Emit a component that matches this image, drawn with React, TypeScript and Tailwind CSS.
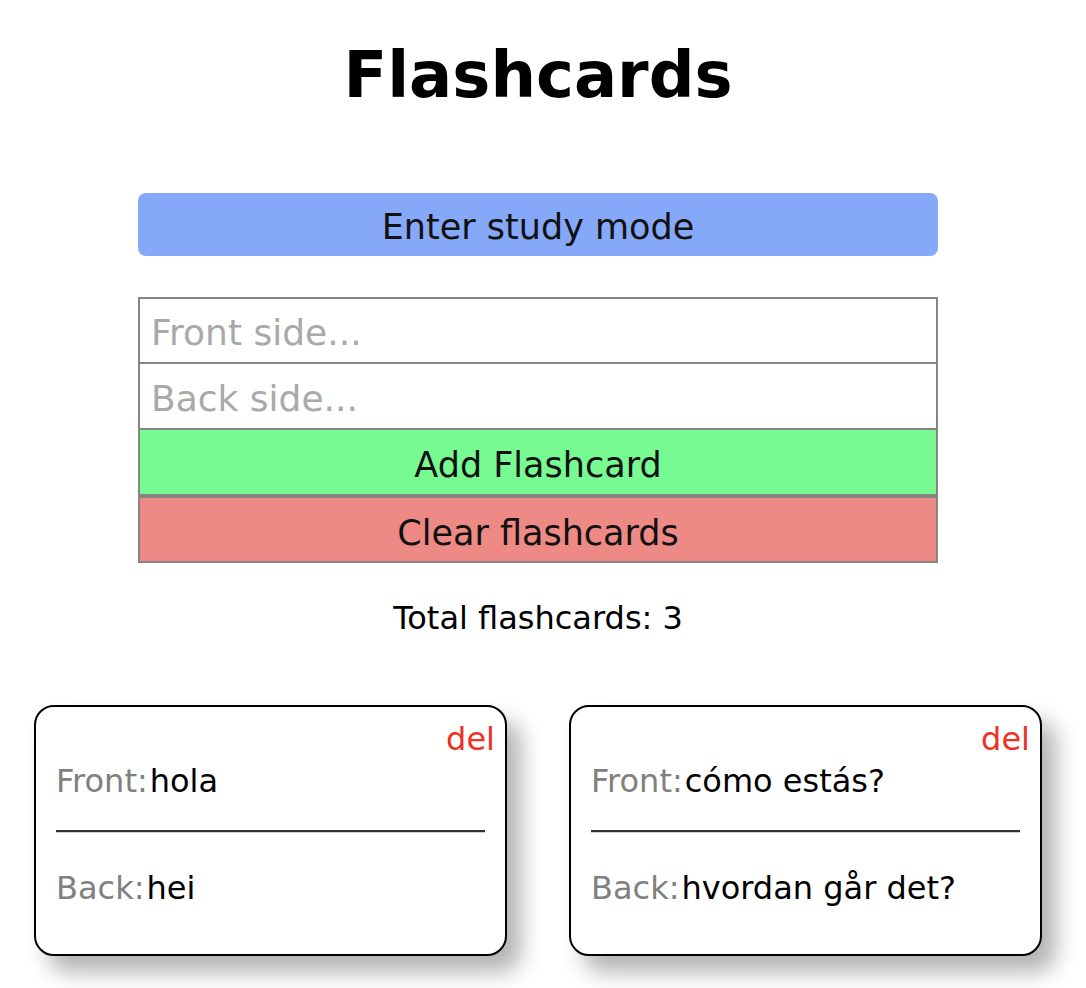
import React from "react";

const cards = [
  { front: "hola", back: "hei" },
  { front: "cómo estás?", back: "hvordan går det?" },
];

export default function App() {
  return (
    <div
      className="w-[1076px] bg-white text-black"
      style={{ fontFamily: '"DejaVu Sans", Verdana, sans-serif' }}
    >
      <h1 className="pt-[38px] text-center text-[64px] font-bold leading-[75px]">
        Flashcards
      </h1>

      <div className="mx-auto mt-[80px] w-[800px]">
        <button className="block h-[63px] w-full rounded-[8px] bg-[#85a8f8] pt-[5px] text-[35px] leading-[58px] text-[#111]">
          Enter study mode
        </button>

        <div className="mt-[41px] flex flex-col">
          <input
            placeholder="Front side..."
            className="block h-[67px] w-full border-2 border-[#858585] bg-white px-[11px] pt-[4px] text-[36px] outline-none placeholder:text-[#a9a9a9]"
          />
          <input
            placeholder="Back side..."
            className="block h-[66px] w-full border-2 border-t-0 border-[#858585] bg-white px-[11px] pt-[5px] text-[36px] outline-none placeholder:text-[#a9a9a9]"
          />
          <button className="block h-[66px] w-full border-2 border-t-0 border-[#858585] bg-[#78fa93] pt-[6px] text-[35px] text-[#111]">
            Add Flashcard
          </button>
          <button className="block h-[67px] w-full border-2 border-[#858585] bg-[#ee8a86] pt-[7px] text-[35px] text-[#111]">
            Clear flashcards
          </button>
        </div>

        <p className="mt-[37px] text-center text-[32px] leading-[37px]">
          Total flashcards: 3
        </p>
      </div>

      <div className="mt-[68px] grid grid-cols-2 gap-[62px] px-[34px] pb-[40px]">
        {cards.map((c, i) => (
          <div
            key={i}
            className="box-border h-[251px] rounded-[20px] border-2 border-black bg-white px-[20px] pt-[14px] shadow-[14px_16px_22px_rgba(0,0,0,0.3)]"
          >
            <div className="-mr-[10px] text-right text-[32px] leading-[37px] text-[#ee3124]">
              del
            </div>
            <p className="mt-[5px] text-[32px] leading-[37px]">
              <span className="pr-[2px] text-[#808080]">Front:</span>
              <span>{c.front}</span>
            </p>
            <hr className="mt-[30px] border-0 border-t-2 border-t-[#333] border-b border-b-[#ccc]" />
            <p className="mt-[37px] text-[32px] leading-[37px]">
              <span className="pr-[2px] text-[#808080]">Back:</span>
              <span>{c.back}</span>
            </p>
          </div>
        ))}
      </div>
    </div>
  );
}
